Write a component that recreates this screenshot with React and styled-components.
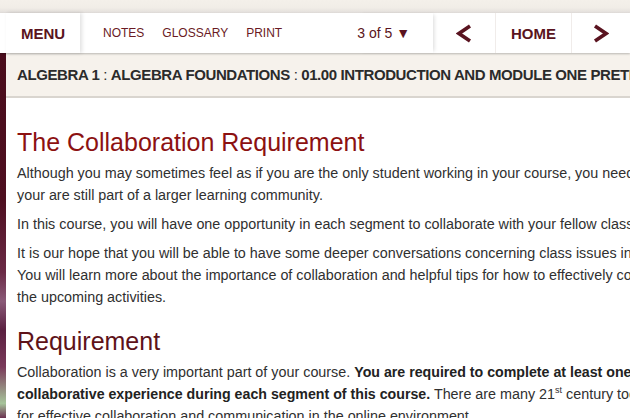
import React from "react";
import styled, { createGlobalStyle } from "styled-components";

const Global = createGlobalStyle`
  html, body { margin: 0; padding: 0; background: #f3efe9; }
  body { font-family: "Liberation Sans", Arial, sans-serif; overflow: hidden; }
`;

const Page = styled.div`
  width: 630px;
  height: 418px;
  overflow: hidden;
  display: flex;
  flex-direction: column;
  background: #f3efe9;
`;

const TopStrip = styled.div`
  height: 13px;
  flex-shrink: 0;
  background: linear-gradient(#f4f0ea 0%, #f1ede7 60%, #e2dedb 100%);
`;

const Nav = styled.div`
  height: 40px;
  flex-shrink: 0;
  display: flex;
  align-items: stretch;
  background: #fff;
  box-shadow: 0 1px 2px rgba(0, 0, 0, 0.25);
  position: relative;
  z-index: 2;
`;

const MenuButton = styled.div`
  margin-left: 6px;
  width: 74px;
  display: flex;
  align-items: center;
  justify-content: center;
  font-weight: bold;
  font-size: 15px;
  color: #5a1420;
  box-shadow: 2px 0 4px rgba(0, 0, 0, 0.12);
`;

const Links = styled.div`
  display: flex;
  align-items: center;
  gap: 18px;
  padding-left: 23px;
  flex: 1;
`;

const NavLink = styled.span`
  font-size: 12px;
  color: #6a1a24;
`;

const Pager = styled.div`
  display: flex;
  align-items: center;
  padding-right: 23px;
  font-size: 14px;
  color: #5a1420;
  box-shadow: 3px 0 4px -2px rgba(0, 0, 0, 0.15);
`;

const NavCell = styled.div`
  width: ${(p) => p.$w}px;
  display: flex;
  align-items: center;
  justify-content: center;
  font-weight: bold;
  font-size: 15px;
  color: #5a1420;
  border-right: ${(p) => (p.$line ? "1px solid #f0ecea" : "none")};
`;

const Body = styled.div`
  flex: 1;
  display: flex;
  min-height: 0;
`;

const SideStrip = styled.div`
  width: 6px;
  flex-shrink: 0;
  background: linear-gradient(
    #4a0d1c 0%,
    #4e0f20 40%,
    #6a2a45 60%,
    #8a5a78 68%,
    #5a2040 76%,
    #7a3a5a 86%,
    #a6c49a 96%,
    #6a3050 100%
  );
`;

const Main = styled.div`
  flex: 1;
  min-width: 0;
  display: flex;
  flex-direction: column;
  background: #fff;
`;

const Crumb = styled.div`
  height: 43px;
  flex-shrink: 0;
  display: flex;
  align-items: center;
  padding-left: 11px;
  background: #f6f2ec;
  border-bottom: 2px solid #d9d5cf;
  font-weight: bold;
  font-size: 15px;
  letter-spacing: -0.4px;
  color: #2b2b2b;
  white-space: pre;
  overflow: hidden;
`;

const Sep = styled.span`
  font-weight: normal;
`;

const Content = styled.div`
  padding: 28px 0 0 11px;
  white-space: nowrap;
  overflow: hidden;
`;

const Heading = styled.h1`
  margin: ${(p) => (p.$first ? "0" : "17px")} 0 4px;
  font-weight: normal;
  font-size: 25px;
  line-height: 32px;
  color: ${(p) => p.$color};
`;

const Para = styled.p`
  margin: 0 0 7px;
  font-size: 14.35px;
  line-height: 22px;
  color: #303030;

  b { color: #222; font-size: 14.2px; }
  sup { font-size: 9px; line-height: 0; }
`;

export default function App() {
  return (
    <>
      <Global />
      <Page>
        <TopStrip />
        <Nav>
          <MenuButton>MENU</MenuButton>
          <Links>
            <NavLink>NOTES</NavLink>
            <NavLink>GLOSSARY</NavLink>
            <NavLink>PRINT</NavLink>
          </Links>
          <Pager>3 of 5 &#9660;</Pager>
          <NavCell $w={62} $line>
            <svg width="16" height="19" viewBox="0 0 16 19">
              <path d="M14 2 L3 9.5 L14 17" fill="none" stroke="#5a1420" strokeWidth="3.6" />
            </svg>
          </NavCell>
          <NavCell $w={75} $line>HOME</NavCell>
          <NavCell $w={58}>
            <svg width="16" height="19" viewBox="0 0 16 19">
              <path d="M2 2 L13 9.5 L2 17" fill="none" stroke="#5a1420" strokeWidth="3.6" />
            </svg>
          </NavCell>
        </Nav>
        <Body>
          <SideStrip />
          <Main>
            <Crumb>
              ALGEBRA 1<Sep> : </Sep>ALGEBRA FOUNDATIONS<Sep> : </Sep>01.00 INTRODUCTION AND MODULE ONE PRETEST
            </Crumb>
            <Content>
              <Heading $first $color="#8c1111">The Collaboration Requirement</Heading>
              <Para>
                Although you may sometimes feel as if you are the only student working in your course, you need to remember that
                <br />
                your are still part of a larger learning community.
              </Para>
              <Para>In this course, you will have one opportunity in each segment to collaborate with your fellow classmates.</Para>
              <Para>
                It is our hope that you will be able to have some deeper conversations concerning class issues in these activities.
                <br />
                You will learn more about the importance of collaboration and helpful tips for how to effectively collaborate in
                <br />
                the upcoming activities.
              </Para>
              <Heading $color="#5e1219">Requirement</Heading>
              <Para>
                Collaboration is a very important part of your course. <b>You are required to complete at least one</b>
                <br />
                <b>collaborative experience during each segment of this course.</b> There are many 21<sup>st</sup> century tools
                <br />
                for effective collaboration and communication in the online environment.
              </Para>
            </Content>
          </Main>
        </Body>
      </Page>
    </>
  );
}
